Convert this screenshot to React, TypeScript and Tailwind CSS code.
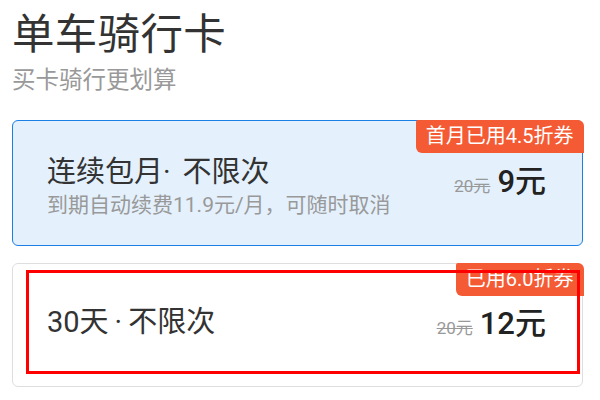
export default function App() {
  return (
    <div
      className="relative w-[600px] h-[400px] overflow-hidden bg-white"
      style={{ fontFamily: 'Roboto, "Noto Sans CJK SC", "Noto Sans", sans-serif' }}
    >
      <div className="pl-3 pt-[10px]">
        <h1 className="text-[42.5px] leading-[50px] text-[#333] tracking-[0.3px]">单车骑行卡</h1>
        <p className="mt-[5px] text-[23.5px] leading-[30px] text-[#999]">买卡骑行更划算</p>
      </div>

      <div className="mt-[25px] ml-3 w-[571px] flex flex-col gap-[17px]">
        {/* 连续包月 */}
        <div className="relative h-[126px] rounded-[6px] border-[1.5px] border-[#1b7fe6] bg-[#e4f1fd] flex items-center justify-between pl-[34px] pr-[36px]">
          <div className="flex flex-col pt-[6px]">
            <span className="text-[29px] leading-[36px] text-[#333]">
              连续包月<span className="mr-[12px]">·</span>不限次
            </span>
            <span className="mt-[1px] text-[21px] leading-[28px] text-[#999]">到期自动续费11.9元/月，可随时取消</span>
          </div>
          <div className="flex items-baseline gap-[7px] pb-[2px]">
            <span className="text-[17px] text-[#999] line-through">20元</span>
            <span className="text-[31px] font-medium text-[#222]">9元</span>
          </div>
          <div className="absolute -top-[1.5px] -right-[1.5px] h-[33px] px-[10px] flex items-center bg-[#f45b35] text-white text-[20px] rounded-tr-[6px] rounded-bl-[6px] rounded-tl-[2px]">
            首月已用4.5折券
          </div>
        </div>

        {/* 30天 */}
        <div className="relative h-[124px] rounded-[6px] border-[1.5px] border-[#dedede] bg-white flex items-center justify-between pl-[34px] pr-[36px]">
          <span className="pb-[6px] text-[29px] leading-[36px] text-[#333]">
            30天<span className="mx-[6px]">·</span>不限次
          </span>
          <div className="flex items-baseline gap-[7px] pb-[2px]">
            <span className="text-[17px] text-[#999] line-through">20元</span>
            <span className="text-[31px] font-medium text-[#222]">12元</span>
          </div>
          <div className="absolute -top-[1.5px] -right-[1.5px] h-[33px] px-[10px] flex items-center bg-[#f45b35] text-white text-[20px] rounded-tr-[6px] rounded-bl-[6px] rounded-tl-[2px]">
            已用6.0折券
          </div>
        </div>
      </div>

      {/* 标注框 */}
      <div className="absolute left-[26px] top-[270px] w-[554px] h-[104px] border-[3px] border-[#ff0000] pointer-events-none" />
    </div>
  );
}
